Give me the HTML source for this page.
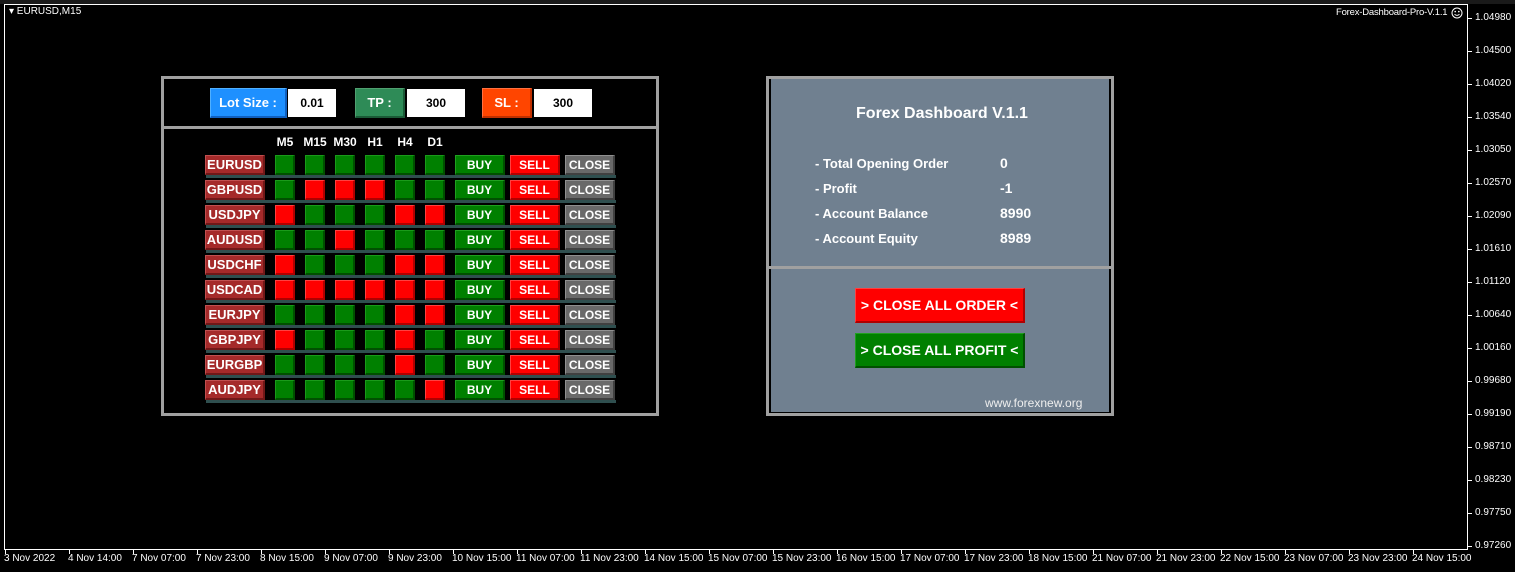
<!DOCTYPE html>
<html><head><meta charset="utf-8"><style>
*{margin:0;padding:0;box-sizing:border-box}
body{width:1515px;height:572px;background:#000;position:relative;overflow:hidden;font-family:"Liberation Sans",sans-serif;color:#fff}
.a{position:absolute}
.sm{font-size:10px;white-space:nowrap}
.btn{position:absolute;display:flex;align-items:center;justify-content:center;font-weight:bold;font-size:12px;color:#fff;border-style:solid;border-width:1px 2px 2px 1px}
.sq{position:absolute;width:20px;height:20px;border-style:solid;border-width:1px 2px 2px 1px}
.g{background:#008000;border-color:#1a9a1a #005000 #005000 #1a9a1a}
.r{background:#ff0000;border-color:#ff4040 #b00000 #b00000 #ff4040}
</style></head><body>
<div class="a" style="left:4px;top:4px;width:1464px;height:546px;border:1px solid #fff"></div>
<div class="a" style="left:0;top:0;width:1515px;height:4px;background:#1a1a1a"></div>
<div class="a sm" style="left:9px;top:6px;font-size:10px">▾ EURUSD,M15</div>
<div class="a sm" style="left:1336px;top:7px;font-size:9.5px;letter-spacing:-0.2px">Forex-Dashboard-Pro-V.1.1</div>
<svg class="a" style="left:1451px;top:7px" width="12" height="12" viewBox="0 0 12 12"><circle cx="6" cy="6" r="5" fill="none" stroke="#fff" stroke-width="1"/><circle cx="4.2" cy="4.6" r="0.8" fill="#fff"/><circle cx="7.8" cy="4.6" r="0.8" fill="#fff"/><path d="M3.5 7.2 Q6 9.6 8.5 7.2" fill="none" stroke="#fff" stroke-width="1"/></svg>

<!-- left panel -->
<div class="a" style="left:161px;top:76px;width:498px;height:340px;border:3px solid #a0a0a0"></div>
<div class="a" style="left:161px;top:126px;width:498px;height:3px;background:#a0a0a0"></div>
<div class="btn" style="left:210px;top:88px;width:77px;height:30px;background:#1e90ff;border-color:#50b0ff #1060c0 #1060c0 #50b0ff;font-size:13px">Lot Size :</div>
<div class="a" style="left:288px;top:89px;width:48px;height:28px;background:#fff;color:#000;font-weight:bold;font-size:12px;text-align:center;line-height:28px">0.01</div>
<div class="btn" style="left:355px;top:88px;width:50px;height:30px;background:#2e8b57;border-color:#50a070 #1a5a36 #1a5a36 #50a070;font-size:13px">TP :</div>
<div class="a" style="left:407px;top:89px;width:58px;height:28px;background:#fff;color:#000;font-weight:bold;font-size:12px;text-align:center;line-height:28px">300</div>
<div class="btn" style="left:482px;top:88px;width:50px;height:30px;background:#ff4500;border-color:#ff7040 #c03000 #c03000 #ff7040;font-size:13px">SL :</div>
<div class="a" style="left:534px;top:89px;width:58px;height:28px;background:#fff;color:#000;font-weight:bold;font-size:12px;text-align:center;line-height:28px">300</div>
<div id="tbl"></div>

<!-- right panel -->
<div class="a" style="left:766px;top:76px;width:348px;height:340px;border:3px solid #a0a0a0;background:#000"></div>
<div class="a" style="left:771px;top:79px;width:338px;height:188px;background:#708090"></div>
<div class="a" style="left:769px;top:266px;width:342px;height:3px;background:#a0a0a0"></div>
<div class="a" style="left:771px;top:269px;width:338px;height:143px;background:#708090"></div>
<div class="a" style="left:768px;top:105px;width:348px;text-align:center;font-weight:bold;font-size:16px">Forex Dashboard V.1.1</div>
<div class="a" style="left:815px;top:151px;font-weight:bold;font-size:13px;line-height:25px">- Total Opening Order<br>- Profit<br>- Account Balance<br>- Account Equity</div>
<div class="a" style="left:1000px;top:151px;font-weight:bold;font-size:14px;line-height:25px">0<br>-1<br>8990<br>8989</div>
<div class="btn" style="left:855px;top:288px;width:170px;height:35px;background:#ff0000;border-color:#ff4040 #b00000 #b00000 #ff4040;font-size:14px">&gt; CLOSE ALL ORDER &lt;</div>
<div class="btn" style="left:855px;top:333px;width:170px;height:35px;background:#008000;border-color:#20a020 #005000 #005000 #20a020;font-size:14px">&gt; CLOSE ALL PROFIT &lt;</div>
<div class="a" style="left:985px;top:396px;font-size:12px;color:#eee">www.forexnew.org</div>
<div id="axes"></div>
<script>
var rows=[["EURUSD","GGGGGG"],["GBPUSD","GRRRGG"],["USDJPY","RGGGRR"],["AUDUSD","GGRGGG"],["USDCHF","RGGGRR"],["USDCAD","RRRRRR"],["EURJPY","GGGGRR"],["GBPJPY","RGGGRG"],["EURGBP","GGGGRG"],["AUDJPY","GGGGGR"]];
var h="";var tf=["M5","M15","M30","H1","H4","D1"];
tf.forEach(function(t,i){h+='<div class="a" style="left:'+(270+i*30)+'px;top:135px;width:30px;text-align:center;font-weight:bold;font-size:12px">'+t+'</div>';});
rows.forEach(function(r,k){var y=155+k*25;
h+='<div class="a" style="left:206px;top:'+(y+20)+'px;width:410px;height:3px;background:#2f4f4f"></div>';
h+='<div class="btn" style="left:205px;top:'+y+'px;width:60px;height:20px;background:#a52a2a;border-color:#c05050 #701818 #701818 #c05050;font-size:13px">'+r[0]+'</div>';
for(var i=0;i<6;i++)h+='<div class="sq '+(r[1][i]=="G"?"g":"r")+'" style="left:'+(275+i*30)+'px;top:'+y+'px"></div>';
h+='<div class="btn" style="left:455px;top:'+y+'px;width:50px;height:20px;background:#008000;border-color:#20a020 #005000 #005000 #20a020">BUY</div>';
h+='<div class="btn" style="left:510px;top:'+y+'px;width:50px;height:20px;background:#ff0000;border-color:#ff4040 #b00000 #b00000 #ff4040">SELL</div>';
h+='<div class="btn" style="left:565px;top:'+y+'px;width:50px;height:20px;background:#696969;border-color:#909090 #404040 #404040 #909090">CLOSE</div>';});
document.getElementById("tbl").innerHTML=h;
var p=["1.04980","1.04500","1.04020","1.03540","1.03050","1.02570","1.02090","1.01610","1.01120","1.00640","1.00160","0.99680","0.99190","0.98710","0.98230","0.97750","0.97260"];
var a="";p.forEach(function(v,i){var y=Math.round(18+i*33);a+='<div class="a" style="left:1468px;top:'+y+'px;width:4px;height:1px;background:#fff"></div><div class="a sm" style="left:1475px;top:'+(y-6)+'px">'+v+'</div>';});
var t=["3 Nov 2022","4 Nov 14:00","7 Nov 07:00","7 Nov 23:00","8 Nov 15:00","9 Nov 07:00","9 Nov 23:00","10 Nov 15:00","11 Nov 07:00","11 Nov 23:00","14 Nov 15:00","15 Nov 07:00","15 Nov 23:00","16 Nov 15:00","17 Nov 07:00","17 Nov 23:00","18 Nov 15:00","21 Nov 07:00","21 Nov 23:00","22 Nov 15:00","23 Nov 07:00","23 Nov 23:00","24 Nov 15:00"];
t.forEach(function(v,i){var x=4+i*64;a+='<div class="a" style="left:'+(x+1)+'px;top:550px;width:1px;height:4px;background:#fff"></div><div class="a sm" style="left:'+x+'px;top:553px">'+v+'</div>';});
document.getElementById("axes").innerHTML=a;
</script>
</body></html>
